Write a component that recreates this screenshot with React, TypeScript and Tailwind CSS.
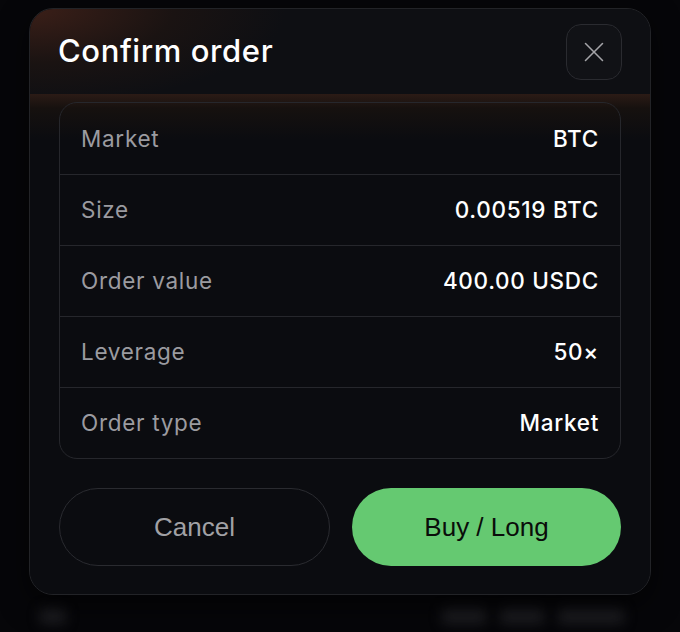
import { X } from "lucide-react";

const rows = [
  { label: "Market", value: "BTC" },
  { label: "Size", value: "0.00519 BTC" },
  { label: "Order value", value: "400.00 USDC" },
  { label: "Leverage", value: "50×" },
  { label: "Order type", value: "Market" },
];

export default function App() {
  return (
    <div className="relative h-[632px] w-[680px] overflow-hidden bg-[#060609] font-['Inter',sans-serif]">
      {/* blurred page content behind the sheet */}
      <div className="absolute bottom-[-4px] left-0 right-0 flex h-[40px] items-center justify-between pl-[40px] pr-[56px] blur-[6px]">
        <div className="h-[16px] w-[26px] rounded bg-[#1c1c20]" />
        <div className="flex gap-[14px]">
          <div className="h-[16px] w-[44px] rounded bg-[#1c1c20]" />
          <div className="h-[16px] w-[44px] rounded bg-[#1c1c20]" />
          <div className="h-[16px] w-[66px] rounded bg-[#1c1c20]" />
        </div>
      </div>

      <div className="relative ml-[29px] mt-[8px] w-[622px] overflow-hidden rounded-[24px] border border-[#222327] bg-[#0b0c10] shadow-[0_10px_30px_rgba(0,0,0,0.6)]">
        <div className="flex h-[85px] items-center justify-between bg-[radial-gradient(ellipse_320px_120px_at_0%_0%,#3b1f18,#1a1312_45%,#0e0f13_80%)] pl-[28px] pr-[28px]">
          <h1 className="text-[31px] font-medium tracking-[0.6px] text-white">Confirm order</h1>
          <button className="flex h-[56px] w-[56px] items-center justify-center rounded-[15px] border border-[#2a2b30] bg-[#111216]">
            <X size={34} strokeWidth={1.1} className="text-[#a4a4a8]" />
          </button>
        </div>

        <div className="bg-[linear-gradient(to_bottom,#2b1b16,#16110f_14px,#0b0c10_45px)] px-[29px] pb-[28px] pt-[8px]">
          <div className="rounded-[18px] border border-[#26272c]">
            {rows.map((r, i) => (
              <div
                key={r.label}
                className={`flex h-[71px] items-center justify-between px-[21px] ${i > 0 ? "border-t border-[#26272c]" : ""}`}
              >
                <span className="text-[22.5px] tracking-[0.7px] text-[#9b9ba0]">{r.label}</span>
                <span className="text-[22.5px] font-medium tracking-[0.7px] text-white">{r.value}</span>
              </div>
            ))}
          </div>

          <div className="mt-[29px] flex gap-[22px] font-['Liberation_Sans',Arial,sans-serif]">
            <button className="flex h-[78px] flex-1 items-center justify-center rounded-full border border-[#2a2b30] text-[26px] text-[#a1a1a5]">
              Cancel
            </button>
            <button className="flex h-[78px] flex-1 items-center justify-center rounded-full bg-[#65c971] text-[26px] text-[#0a0d0a]">
              Buy / Long
            </button>
          </div>
        </div>
      </div>
    </div>
  );
}
